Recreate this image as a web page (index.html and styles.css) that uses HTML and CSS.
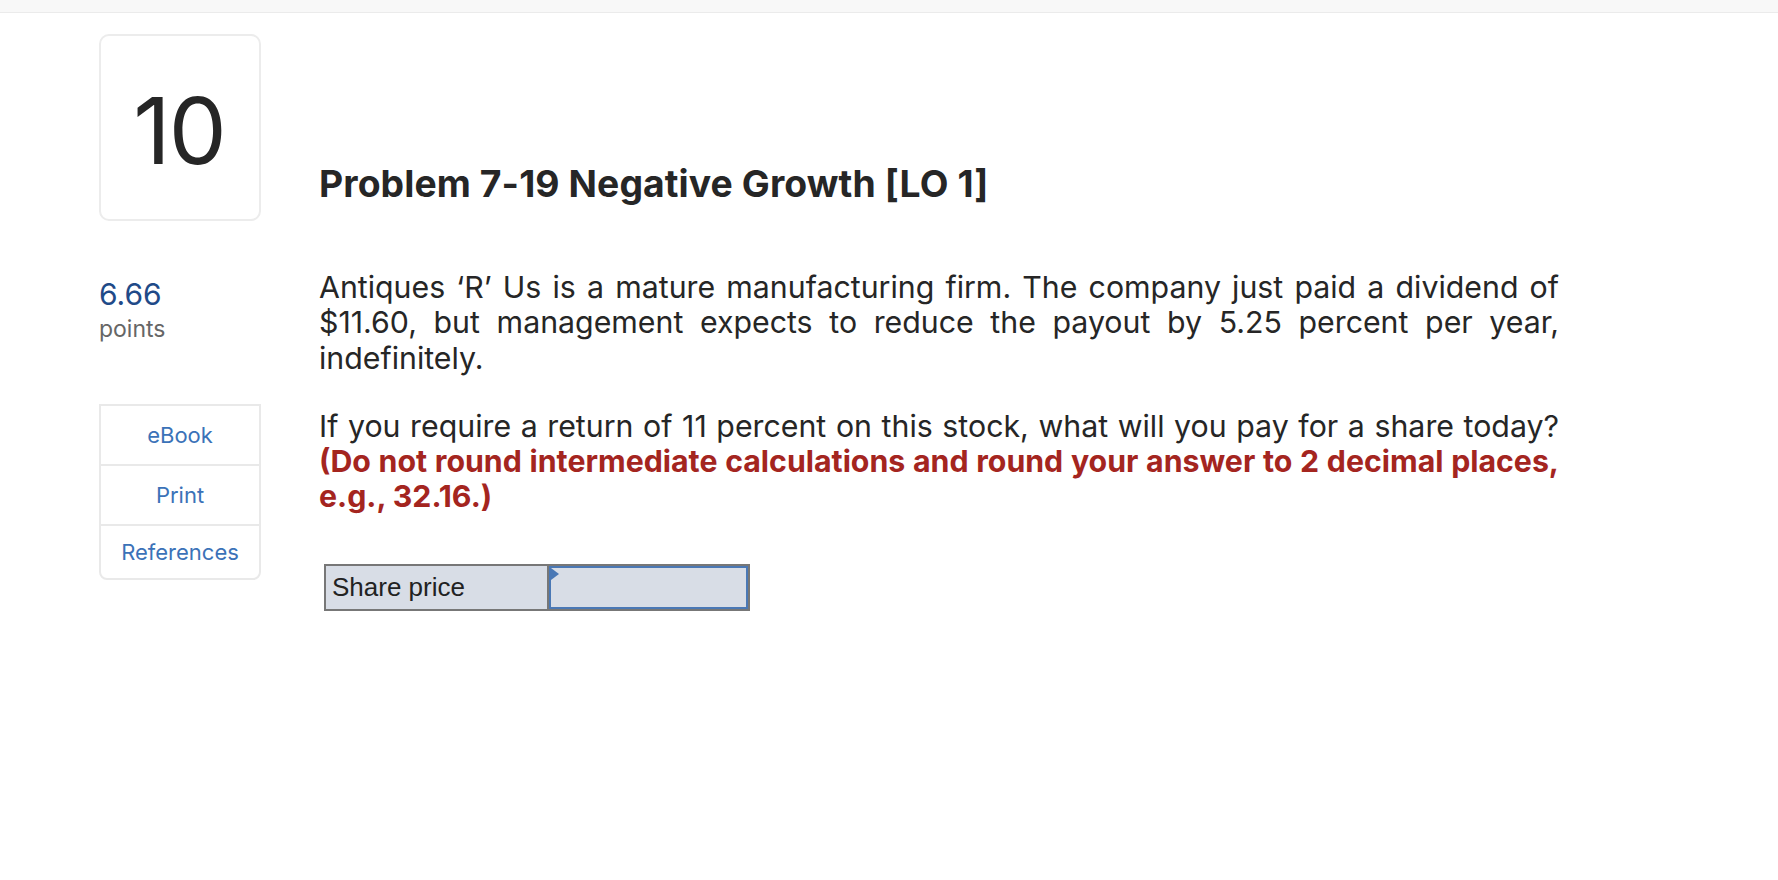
FILE: index.html
```html
<!DOCTYPE html>
<html lang="en">
<head>
<meta charset="utf-8">
<title>Problem 7-19 Negative Growth</title>
<link rel="stylesheet" href="styles.css">
</head>
<body>
<div class="topbar"></div>
<div class="page">
  <div class="row header">
    <div class="side">
      <div class="qnum">10</div>
    </div>
    <h1 class="title">Problem 7-19 Negative Growth [LO 1]</h1>
  </div>
  <div class="row main">
    <div class="side">
      <div class="points">
        <div class="pts-val">6.66</div>
        <div class="pts-lbl">points</div>
      </div>
      <div class="tools">
        <a class="tool tool-a">eBook</a>
        <a class="tool tool-b">Print</a>
        <a class="tool tool-c">References</a>
      </div>
    </div>
    <div class="content">
      <p class="para">Antiques ‘R’ Us is a mature manufacturing firm. The company just paid a dividend of $11.60, but management expects to reduce the payout by 5.25 percent per year, indefinitely.</p>
      <p class="para">If you require a return of 11 percent on this stock, what will you pay for a share today? <strong class="note">(Do not round intermediate calculations and round your answer to 2 decimal places, e.g., 32.16.)</strong></p>
      <div class="answer">
        <div class="ans-label">Share price</div>
        <div class="ans-input"><span class="flag"></span></div>
      </div>
    </div>
  </div>
</div>
</body>
</html>
```
FILE: styles.css
```css
html, body {
  margin: 0;
  padding: 0;
  background: #ffffff;
}
body {
  font-family: "Inter", "Lato", "Liberation Sans", sans-serif;
  color: #262626;
}
.topbar {
  height: 12px;
  background: #f8f8f8;
  border-bottom: 1px solid #ebebeb;
}
.page {
  padding-left: 99px;
}
.row {
  display: flex;
  gap: 58px;
}
.side {
  width: 162px;
  flex: none;
}
.header {
  margin-top: 21px;
  align-items: flex-end;
}
.qnum {
  box-sizing: border-box;
  height: 187px;
  border: 2px solid #ececec;
  border-radius: 10px;
  display: flex;
  align-items: center;
  justify-content: center;
  font-size: 92px;
  font-weight: 400;
  letter-spacing: -2px;
  color: #262626;
  padding-top: 6px;
  padding-right: 2px;
}
.title {
  margin: 0 0 15px 0;
  font-size: 37.3px;
  line-height: 44px;
  font-weight: 700;
  letter-spacing: 0.1px;
  color: #262626;
}
.main {
  margin-top: 49px;
}
.points {
  padding-top: 7px;
}
.pts-val {
  font-size: 30px;
  line-height: 34px;
  color: #1f4a88;
}
.pts-lbl {
  margin-top: 2px;
  font-size: 23px;
  line-height: 32px;
  color: #666666;
}
.tools {
  margin-top: 59px;
  border: 2px solid #e9e9e9;
  border-radius: 0 0 8px 8px;
  display: flex;
  flex-direction: column;
}
.tool {
  display: flex;
  align-items: center;
  justify-content: center;
  font-size: 22px;
  color: #3b72b8;
}
.tool-a {
  height: 58px;
}
.tool-b,
.tool-c {
  border-top: 2px solid #e9e9e9;
}
.tool-b {
  height: 58px;
}
.tool-c {
  height: 52px;
}
.content {
  width: 1240px;
  flex: none;
}
.para {
  margin: 0 0 33px 0;
  font-size: 30.3px;
  line-height: 35.3px;
  text-align: justify;
}
.note {
  color: #a4251f;
  font-weight: 700;
}
.answer {
  margin-top: 49px;
  margin-left: 5px;
  width: 426px;
  height: 47px;
  box-sizing: border-box;
  border: 2px solid #777777;
  display: flex;
  background: #d8dde6;
}
.ans-label {
  width: 223px;
  box-sizing: border-box;
  border-right: 2px solid #777777;
  font-family: "Liberation Sans", Arial, sans-serif;
  font-size: 26px;
  line-height: 43px;
  padding-left: 6px;
  color: #222222;
}
.ans-input {
  flex: 1;
  border: 2px solid #4a78b5;
  position: relative;
}
.flag {
  position: absolute;
  left: 0;
  top: 0;
  width: 0;
  height: 0;
  border-top: 6px solid transparent;
  border-bottom: 6px solid transparent;
  border-left: 8px solid #4a78b5;
}
```
